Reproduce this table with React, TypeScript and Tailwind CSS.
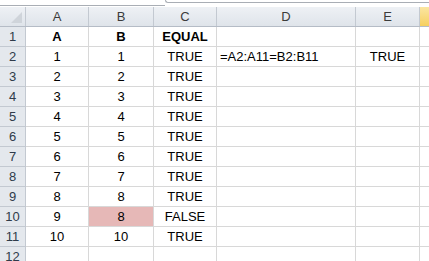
import React from 'react';

const COLS = [
  { key: 'A', w: 'w-[63px]' },
  { key: 'B', w: 'w-[65px]' },
  { key: 'C', w: 'w-[63px]' },
  { key: 'D', w: 'w-[139px]' },
  { key: 'E', w: 'w-[64px]' },
];

type Row = { a: string; b: string; c: string; d?: string; e?: string; bold?: boolean; hl?: boolean };

const ROWS: Row[] = [
  { a: 'A', b: 'B', c: 'EQUAL', bold: true },
  { a: '1', b: '1', c: 'TRUE', d: '=A2:A11=B2:B11', e: 'TRUE' },
  { a: '2', b: '2', c: 'TRUE' },
  { a: '3', b: '3', c: 'TRUE' },
  { a: '4', b: '4', c: 'TRUE' },
  { a: '5', b: '5', c: 'TRUE' },
  { a: '6', b: '6', c: 'TRUE' },
  { a: '7', b: '7', c: 'TRUE' },
  { a: '8', b: '8', c: 'TRUE' },
  { a: '9', b: '8', c: 'FALSE', hl: true },
  { a: '10', b: '10', c: 'TRUE' },
  { a: '', b: '', c: '' },
];

const cell = 'h-[20px] shrink-0 border-r border-b border-[#d8d8d8] flex items-center';

export default function App() {
  return (
    <div className="w-[429px] h-[261px] overflow-hidden bg-white text-[13px] text-black" style={{ fontFamily: '"Liberation Sans", Arial, sans-serif' }}>
      {/* strip under formula bar */}
      <div className="flex h-[7px]">
        <div className="w-[165px] h-[6px] border-b border-[#a9aeb5]" />
        <div className="flex-1 h-[3px] border-b border-l border-[#a9aeb5] rounded-bl-[3px]" />
      </div>

      {/* column headers */}
      <div className="flex h-[20px] border-b border-[#b5bcc6] bg-gradient-to-b from-[#eef1f5] to-[#dfe4ea]">
        <div className="w-[26px] shrink-0 border-r border-[#c3c9d1] relative">
          <div className="absolute right-[3px] bottom-[3px] w-0 h-0 border-l-[11px] border-l-transparent border-b-[11px] border-b-[#cfd4da]" />
        </div>
        {COLS.map(c => (
          <div key={c.key} className={`${c.w} shrink-0 border-r border-[#c3c9d1] flex items-center justify-center text-[#3b3b3b]`}>
            {c.key}
          </div>
        ))}
        <div className="flex-1 bg-gradient-to-b from-[#fbe6a1] to-[#f6cf5e]" />
      </div>

      {ROWS.map((r, i) => (
        <div key={i} className="flex">
          <div className="w-[26px] h-[20px] shrink-0 border-r border-b border-[#c3c9d1] bg-[#e4e8ed] flex items-center justify-center text-[#2f3b4a]">
            {i + 1}
          </div>
          <div className={`${cell} w-[63px] justify-center ${r.bold ? 'font-bold' : ''}`}>{r.a}</div>
          <div className={`${cell} w-[65px] justify-center ${r.bold ? 'font-bold' : ''} ${r.hl ? 'bg-[#e6b8b7]' : ''}`}>{r.b}</div>
          <div className={`${cell} w-[63px] justify-center ${r.bold ? 'font-bold' : ''}`}>{r.c}</div>
          <div className={`${cell} w-[139px] pl-[3px]`}>{r.d}</div>
          <div className={`${cell} w-[64px] justify-center`}>{r.e}</div>
          <div className="h-[20px] flex-1 border-b border-[#d8d8d8]" />
        </div>
      ))}
    </div>
  );
}
